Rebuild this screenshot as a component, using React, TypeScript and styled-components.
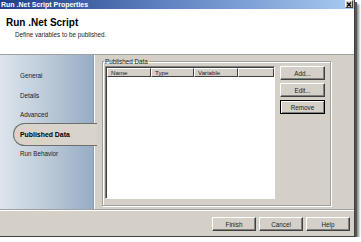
import React from "react";
import styled, { createGlobalStyle } from "styled-components";

const GlobalStyle = createGlobalStyle`
  html, body {
    margin: 0;
    padding: 0;
    background: #fff;
  }
  body {
    font-family: "Liberation Sans", Arial, sans-serif;
    font-size: 6.3px;
    color: #000;
  }
`;

const navItems = ["General", "Details", "Advanced", "Published Data", "Run Behavior"];
const columns = [
  { label: "Name", width: 44 },
  { label: "Type", width: 43 },
  { label: "Variable", width: 44 },
  { label: "", width: 0 }
];

export default function App() {
  return (
    <>
      <GlobalStyle />
      <Window>
        <TitleBar>
          <TitleText>Run .Net Script Properties</TitleText>
          <CloseButton>
            <svg width="6" height="5" viewBox="0 0 6 5">
              <path d="M1 0.5 L5 4.5 M5 0.5 L1 4.5" stroke="#000" strokeWidth="1.3" />
            </svg>
          </CloseButton>
        </TitleBar>
        <Header>
          <HeaderTitle>Run .Net Script</HeaderTitle>
          <HeaderSub>Define variables to be published.</HeaderSub>
        </Header>
        <Body>
          <Sidebar>
            {navItems.map((item) => (
              <NavItem key={item} $active={item === "Published Data"}>
                {item}
              </NavItem>
            ))}
          </Sidebar>
          <Content>
            <GroupBox>
              <Legend>Published Data</Legend>
              <ListView>
                <ListHeader>
                  {columns.map((c, i) => (
                    <ColumnHeader key={i} $width={c.width}>
                      {c.label}
                    </ColumnHeader>
                  ))}
                </ListHeader>
              </ListView>
              <SideButtons>
                <Button>Add...</Button>
                <Button>Edit...</Button>
                <Button $focused>Remove</Button>
              </SideButtons>
            </GroupBox>
          </Content>
        </Body>
        <Footer>
          <Button $wide>Finish</Button>
          <Button $wide>Cancel</Button>
          <Button $wide>Help</Button>
        </Footer>
      </Window>
    </>
  );
}

const Window = styled.div`
  width: 355px;
  height: 237px;
  display: flex;
  flex-direction: column;
  background: #d4d0c8;
  border-right: 1px solid #404040;
  border-bottom: 1px solid #404040;
  box-sizing: border-box;
  box-shadow: 2px 2px 0 #555, 4px 4px 2px rgba(0, 0, 0, 0.45);
`;

const TitleBar = styled.div`
  height: 9px;
  flex: none;
  display: flex;
  align-items: center;
  justify-content: space-between;
  padding-left: 1px;
  background: linear-gradient(to right, #1f3f86, #5d80c0 45%, #a6caf0);
`;

const TitleText = styled.span`
  color: #fff;
  font-weight: bold;
  font-size: 7px;
  line-height: 9px;
`;

const CloseButton = styled.span`
  width: 8px;
  height: 8px;
  margin-right: 1px;
  margin-top: -1px;
  display: flex;
  align-items: center;
  justify-content: center;
  box-sizing: border-box;
  background: #d4d0c8;
  border: 1px solid;
  border-color: #fff #404040 #404040 #fff;
`;

const Header = styled.div`
  height: 46px;
  flex: none;
  box-sizing: border-box;
  background: #fff;
  border-bottom: 1px solid #a0a0a0;
  padding: 8px 0 0 6px;
`;

const HeaderTitle = styled.div`
  font-size: 10px;
  font-weight: bold;
  line-height: 12px;
`;

const HeaderSub = styled.div`
  margin-top: 2px;
  padding-left: 9px;
  line-height: 8px;
  color: #222;
`;

const Body = styled.div`
  flex: 1;
  display: flex;
  min-height: 0;
`;

const Sidebar = styled.div`
  width: 94px;
  flex: none;
  box-sizing: border-box;
  padding-top: 11px;
  display: flex;
  flex-direction: column;
  background: linear-gradient(to right, #dee5ec, #b8c7d6 55%, #97adc4);
  border-right: 1px solid #8a9aab;
`;

const NavItem = styled.div<{ $active?: boolean }>`
  height: ${(p) => (p.$active ? "23px" : "19.5px")};
  margin: ${(p) => (p.$active ? "-1.75px -4px -1.75px 13px" : "0")};
  padding-left: ${(p) => (p.$active ? "6px" : "20px")};
  display: flex;
  align-items: center;
  box-sizing: border-box;
  font-weight: ${(p) => (p.$active ? "bold" : "normal")};
  font-size: ${(p) => (p.$active ? "6.9px" : "6.3px")};
  color: ${(p) => (p.$active ? "#000" : "#1a1a1a")};
  background: ${(p) => (p.$active ? "#d8d4cc" : "transparent")};
  border: ${(p) => (p.$active ? "1px solid #6d6d6d" : "none")};
  border-right: none;
  border-radius: 12px 0 0 12px;
  position: relative;
  z-index: 1;
`;

const Content = styled.div`
  flex: 1;
  display: flex;
  padding: 3px 23px 3px 7px;
  border-left: 1px solid #fff;
`;

const GroupBox = styled.fieldset`
  flex: 1;
  margin: 0;
  padding: 1px 5px 6px 2px;
  display: flex;
  gap: 5px;
  border: 1px solid #a0a0a0;
  box-shadow: 1px 1px 0 #fff, inset 1px 1px 0 #fff;
  min-width: 0;
`;

const Legend = styled.legend`
  padding: 0 1px;
  margin-left: -1px;
  line-height: 7px;
  color: #222;
`;

const ListView = styled.div`
  width: 170px;
  flex: none;
  box-sizing: border-box;
  background: #fff;
  border: 1px solid;
  border-color: #808080 #fff #fff #808080;
  box-shadow: inset 1px 1px 0 #404040;
  padding: 1px 0 0 1px;
`;

const ListHeader = styled.div`
  display: flex;
  height: 9px;
`;

const ColumnHeader = styled.div<{ $width: number }>`
  width: ${(p) => (p.$width ? `${p.$width}px` : "auto")};
  flex: ${(p) => (p.$width ? "none" : "1")};
  box-sizing: border-box;
  background: #d4d0c8;
  border: 1px solid;
  border-color: #fff #404040 #404040 #fff;
  padding-left: 3px;
  line-height: 7px;
  font-size: 6.2px;
  color: #222;
`;

const SideButtons = styled.div`
  display: flex;
  flex-direction: column;
  gap: 3px;
`;

const Button = styled.button<{ $focused?: boolean; $wide?: boolean }>`
  width: ${(p) => (p.$wide ? "44px" : "45px")};
  height: 14px;
  padding: 0;
  box-sizing: border-box;
  font-family: "Liberation Sans", Arial, sans-serif;
  font-size: 6.3px;
  color: #222;
  background: #d4d0c8;
  border: 1px solid;
  border-color: ${(p) => (p.$focused ? "#000" : "#fff #404040 #404040 #fff")};
  box-shadow: ${(p) =>
    p.$focused ? "inset 1px 1px 0 #fff, inset -1px -1px 0 #808080" : "inset -1px -1px 0 #808080"};
`;

const Footer = styled.div`
  height: 27px;
  flex: none;
  box-sizing: border-box;
  display: flex;
  justify-content: flex-end;
  gap: 3px;
  padding: 7px 4px 0 0;
  border-top: 1px solid #a0a0a0;
  box-shadow: inset 0 1px 0 #fff;
`;
